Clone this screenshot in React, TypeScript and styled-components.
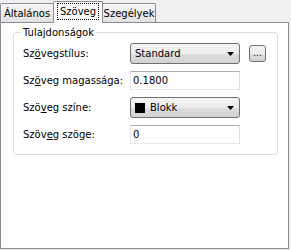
import styled, { createGlobalStyle } from "styled-components";

const GlobalStyle = createGlobalStyle`
  html, body {
    margin: 0;
    padding: 0;
    background: #f0f0f0;
  }
  body {
    font-family: "DejaVu Sans", Verdana, sans-serif;
    font-size: 10px;
    color: #000;
  }
`;

const Window = styled.div`
  width: 291px;
  height: 250px;
  background: #f0f0f0;
  display: flex;
  flex-direction: column;
`;

const TabStrip = styled.div`
  display: flex;
  align-items: flex-end;
  height: 23px;
  margin-bottom: -1px;
  position: relative;
  z-index: 1;
`;

const Tab = styled.div<{ $active?: boolean; $w: number }>`
  box-sizing: border-box;
  width: ${({ $w }) => $w}px;
  height: ${({ $active }) => ($active ? 22 : 19)}px;
  margin-bottom: ${({ $active }) => ($active ? 0 : 1)}px;
  margin-left: -1px;
  &:first-child {
    margin-left: 0;
  }
  border: 1px solid #898c95;
  border-bottom: none;
  border-radius: 2px 2px 0 0;
  background: ${({ $active }) =>
    $active ? "#fff" : "linear-gradient(#f6f6f6 0%, #ececec 50%, #e2e2e2 100%)"};
  display: flex;
  align-items: center;
  justify-content: center;
  padding-bottom: ${({ $active }) => ($active ? 2 : 0)}px;
  position: relative;
  z-index: ${({ $active }) => ($active ? 2 : 1)};
`;

const FocusText = styled.span`
  outline: 1px dotted #000;
  outline-offset: 0;
  padding: 1px 2px;
  line-height: 13px;
`;

const Panel = styled.div`
  box-sizing: border-box;
  width: 289px;
  height: 227px;
  border: 1px solid #898c95;
  background: #fff;
  padding: 3px 10px 0 12px;
`;

const GroupBox = styled.fieldset`
  margin: 0;
  border: 1px solid #d5dfe5;
  border-radius: 3px;
  padding: 1px 8px 6px 9px;
`;

const Legend = styled.legend`
  padding: 0 2px;
  margin-left: -2px;
  line-height: 13px;
`;

const Row = styled.div`
  display: grid;
  grid-template-columns: 98px 110px auto;
  column-gap: 9px;
  align-items: center;
  height: 27px;
`;

const Label = styled.span`
  white-space: nowrap;
`;

const Combo = styled.div`
  box-sizing: border-box;
  height: 21px;
  border: 1px solid #707070;
  border-radius: 3px;
  background: linear-gradient(#f4f4f4 0%, #ececec 50%, #dedede 52%, #d3d3d3 100%);
  display: flex;
  align-items: center;
  gap: 5px;
  padding: 0 5px 0 4px;
`;

const ComboArrow = styled.svg`
  margin-left: auto;
  display: block;
`;

const Swatch = styled.span<{ $c: string }>`
  width: 10px;
  height: 10px;
  background: ${({ $c }) => $c};
`;

const Input = styled.div`
  box-sizing: border-box;
  height: 19px;
  border: 1px solid;
  border-color: #abadb3 #dbdfe6 #e3e9ef #e2e3ea;
  background: #fff;
  display: flex;
  align-items: center;
  padding-left: 2px;
`;

const DotsButton = styled.div`
  box-sizing: border-box;
  width: 17px;
  height: 17px;
  border: 1px solid #707070;
  border-radius: 3px;
  background: linear-gradient(#f4f4f4 0%, #ececec 50%, #dedede 52%, #d3d3d3 100%);
  display: flex;
  align-items: flex-end;
  justify-content: center;
  line-height: 13px;
  font-size: 9px;
  padding-bottom: 1px;
`;

const Arrow = () => (
  <ComboArrow width="7" height="4" viewBox="0 0 7 4">
    <path d="M0 0h7L3.5 4z" fill="#000" />
  </ComboArrow>
);

const App = () => {
  return (
    <>
      <GlobalStyle />
      <Window>
        <TabStrip>
          <Tab $w={54}>Általános</Tab>
          <Tab $w={50} $active>
            <FocusText>Szöveg</FocusText>
          </Tab>
          <Tab $w={54}>Szegélyek</Tab>
        </TabStrip>
        <Panel>
          <GroupBox>
            <Legend>Tulajdonságok</Legend>
            <Row>
              <Label>
                Sz<u>ö</u>vegstílus:
              </Label>
              <Combo>
                Standard
                <Arrow />
              </Combo>
              <DotsButton>...</DotsButton>
            </Row>
            <Row>
              <Label>
                Sz<u>ö</u>veg magassága:
              </Label>
              <Input>0.1800</Input>
            </Row>
            <Row>
              <Label>
                Szö<u>v</u>eg színe:
              </Label>
              <Combo>
                <Swatch $c="#000" />
                Blokk
                <Arrow />
              </Combo>
            </Row>
            <Row>
              <Label>
                Szöv<u>e</u>g szöge:
              </Label>
              <Input>0</Input>
            </Row>
          </GroupBox>
        </Panel>
      </Window>
    </>
  );
};

export default App;
